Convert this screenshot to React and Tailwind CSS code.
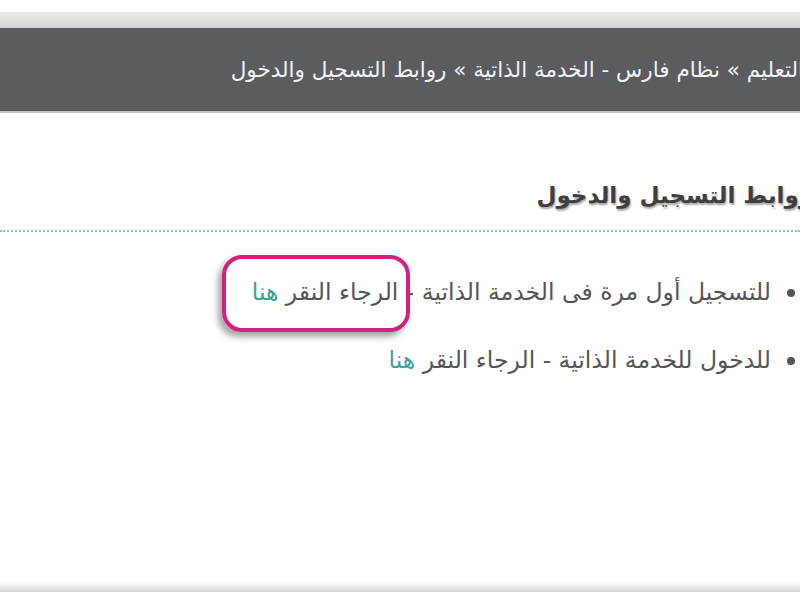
export default function App() {
  return (
    <div
      dir="rtl"
      className="w-[800px] h-[600px] overflow-hidden bg-white flex flex-col"
      style={{ fontFamily: '"DejaVu Sans", "Noto Sans", sans-serif' }}
    >
      <div className="h-[12px] bg-white" />
      <div className="h-[16px] bg-gradient-to-b from-[#ececec] to-[#d4d4d4]" />
      <div className="h-[85px] bg-[#5a5c60] flex items-center overflow-hidden border-b-2 border-[#c8c8c8]">
        <p className="whitespace-nowrap text-[21.5px] text-[#f2f2f2] mr-[-4px] mt-[2px]">
          التعليم » نظام فارس - الخدمة الذاتية » روابط التسجيل والدخول
        </p>
      </div>

      <div className="flex-1 flex flex-col">
        <div className="pt-[65px] overflow-hidden">
          <h1
            className="whitespace-nowrap text-[23px] leading-[34px] font-bold text-[#3f3f3f] mr-[-12px]"
            style={{ textShadow: "1px 2px 2px rgba(0,0,0,0.35)" }}
          >
            روابط التسجيل والدخول
          </h1>
        </div>
        <div className="mt-[18px] border-b-2 border-dotted border-[#8cc8c4]" />

        <ul className="mt-[43px] flex flex-col gap-[33px] mr-[5px] text-[23.5px] leading-[35px] text-[#555]">
          <li className="flex items-center gap-[16px] whitespace-nowrap">
            <span className="w-[8px] h-[8px] rounded-full bg-[#555] shrink-0" />
            <span>
              للتسجيل أول مرة فى الخدمة الذاتية -{" "}
              <span className="relative">
                الرجاء النقر <span className="text-[#3aa39c]">هنا</span>
                <span className="absolute left-[-30px] right-[-12px] top-[-23px] bottom-[-26px] rounded-[20px] border-[4px] border-[#d81f7f] shadow-[-4px_5px_6px_rgba(0,0,0,0.35)]" />
              </span>
            </span>
          </li>
          <li className="flex items-center gap-[16px] whitespace-nowrap">
            <span className="w-[8px] h-[8px] rounded-full bg-[#555] shrink-0" />
            <span>
              للدخول للخدمة الذاتية - الرجاء النقر{" "}
              <span className="text-[#3aa39c]">هنا</span>
            </span>
          </li>
        </ul>

        <div className="flex-1" />
        <div className="h-[10px] bg-gradient-to-b from-white to-[#d6d6d6]" />
        <div className="h-[8px] bg-white" />
      </div>
    </div>
  );
}
